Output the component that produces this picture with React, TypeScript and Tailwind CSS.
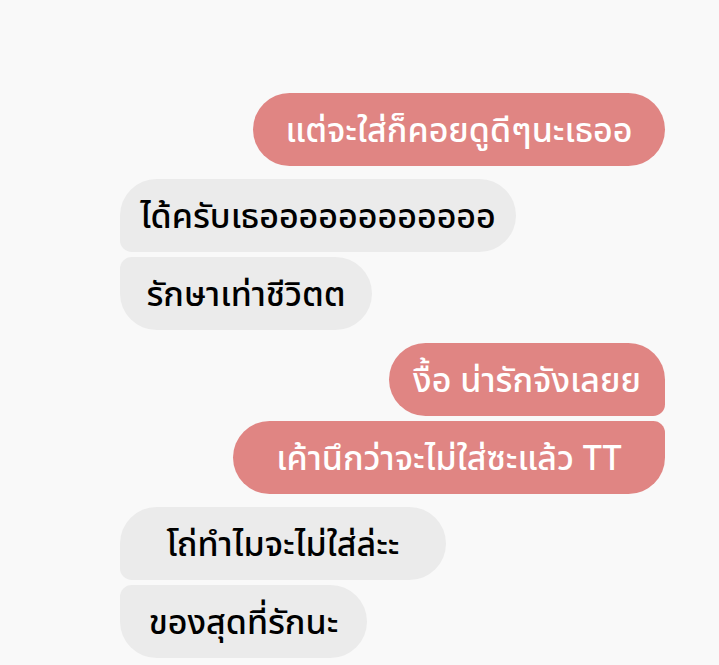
import React from "react";

type Msg = { text: string; cls: string };

const sent1: Msg[] = [{ text: "แต่จะใส่ก็คอยดูดีๆนะเธออ", cls: "w-[412px] rounded-[37px]" }];
const recv1: Msg[] = [
  { text: "ได้ครับเธออออออออออออ", cls: "w-[396px] rounded-[37px] rounded-bl-[12px]" },
  { text: "รักษาเท่าชีวิตต", cls: "w-[252px] rounded-[37px] rounded-tl-[12px]" },
];
const sent2: Msg[] = [
  { text: "งื้อ น่ารักจังเลยย", cls: "w-[276px] rounded-[37px] rounded-br-[12px]" },
  { text: "เค้านึกว่าจะไม่ใส่ซะแล้ว TT", cls: "w-[432px] rounded-[37px] rounded-tr-[12px]" },
];
const recv2: Msg[] = [
  { text: "โถ่ทำไมจะไม่ใส่ล่ะะ", cls: "w-[326px] rounded-[37px] rounded-bl-[12px]" },
  { text: "ของสุดที่รักนะ", cls: "w-[247px] rounded-[37px] rounded-tl-[12px]" },
];

function Group({ items, mine }: { items: Msg[]; mine: boolean }) {
  return (
    <div className={`flex flex-col gap-[5px] ${mine ? "items-end" : "items-start"}`}>
      {items.map((m, i) => (
        <div
          key={i}
          className={`h-[73px] flex items-center justify-center text-[34px] font-medium whitespace-nowrap ${m.cls} ${
            mine ? "bg-[#e08583] text-white" : "bg-[#ebebeb] text-black"
          }`}
        >
          {m.text}
        </div>
      ))}
    </div>
  );
}

export default function App() {
  return (
    <div
      className="w-[719px] h-[665px] overflow-hidden bg-[#f9f9f9] pt-[93px] pl-[120px] pr-[54px] flex flex-col gap-[13px]"
      style={{ fontFamily: '"Noto Sans", "Noto Sans Thai", "DejaVu Sans", sans-serif' }}
    >
      <Group items={sent1} mine />
      <Group items={recv1} mine={false} />
      <Group items={sent2} mine />
      <Group items={recv2} mine={false} />
    </div>
  );
}
